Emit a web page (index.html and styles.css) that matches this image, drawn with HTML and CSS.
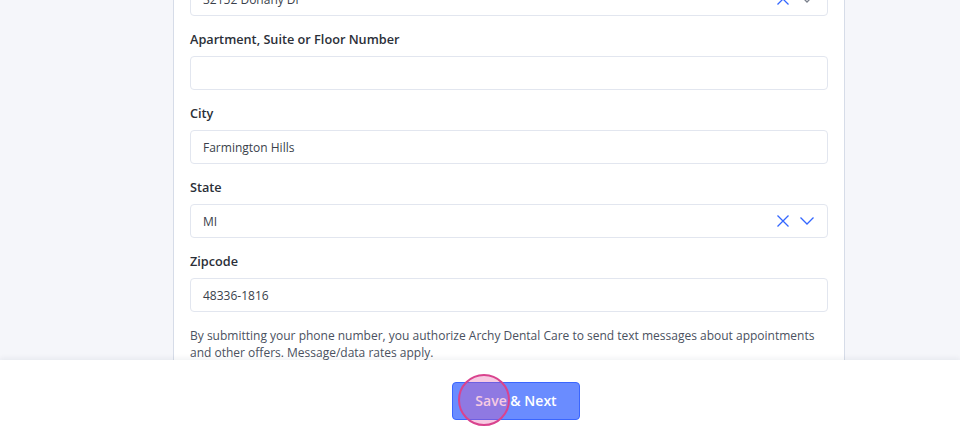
FILE: index.html
```html
<!DOCTYPE html>
<html lang="en">
<head>
<meta charset="utf-8">
<title>Address</title>
<link rel="stylesheet" href="styles.css">
</head>
<body>
<div class="viewport">
  <div class="card">
    <div class="field">
      <label class="label">Street Address</label>
      <div class="input select">
        <span class="value">32152 Donahy Dr</span>
        <span class="icons">
          <svg class="ico" width="12" height="12" viewBox="0 0 12 12"><path d="M0.5 0.5L11.5 11.5M11.5 0.5L0.5 11.5" stroke="#3366ff" stroke-width="1.3" fill="none"/></svg>
          <svg class="ico chev" width="14" height="8" viewBox="0 0 14 8"><path d="M0.5 0.5L7 7L13.5 0.5" stroke="#7a808c" stroke-width="1.3" fill="none"/></svg>
        </span>
      </div>
    </div>
    <div class="field">
      <label class="label">Apartment, Suite or Floor Number</label>
      <div class="input"><span class="value"></span></div>
    </div>
    <div class="field">
      <label class="label">City</label>
      <div class="input"><span class="value">Farmington Hills</span></div>
    </div>
    <div class="field">
      <label class="label">State</label>
      <div class="input select">
        <span class="value">MI</span>
        <span class="icons">
          <svg class="ico" width="12" height="12" viewBox="0 0 12 12"><path d="M0.5 0.5L11.5 11.5M11.5 0.5L0.5 11.5" stroke="#3366ff" stroke-width="1.3" fill="none"/></svg>
          <svg class="ico chev" width="14" height="8" viewBox="0 0 14 8"><path d="M0.5 0.5L7 7L13.5 0.5" stroke="#3366ff" stroke-width="1.3" fill="none"/></svg>
        </span>
      </div>
    </div>
    <div class="field">
      <label class="label">Zipcode</label>
      <div class="input"><span class="value">48336-1816</span></div>
    </div>
    <p class="notice">By submitting your phone number, you authorize Archy Dental Care to send text messages about appointments and other offers. Message/data rates apply.</p>
  </div>
</div>
<footer class="footer">
  <button class="btn" type="button">Save &amp; Next</button>
  <span class="click-dot"></span>
</footer>
</body>
</html>
```
FILE: styles.css
```css
* { box-sizing: border-box; }
html, body { margin: 0; padding: 0; }
body {
  width: 960px;
  height: 441px;
  overflow: hidden;
  font-family: "Open Sans", "Noto Sans", sans-serif;
  background: #f5f6fa;
  color: #2b2f38;
}
.viewport {
  height: 360px;
  overflow: hidden;
  background: #f5f6fa;
}
.card {
  margin-top: -60px;
  margin-left: 173px;
  width: 672px;
  background: #ffffff;
  border-left: 1px solid #d6dce8;
  border-right: 1px solid #d6dce8;
  padding: 16px 16px 40px;
}
.field {
  display: flex;
  flex-direction: column;
  gap: 8px;
  margin-bottom: 14px;
}
.label {
  font-size: 12.7px;
  font-weight: 600;
  line-height: 18px;
  color: #2b2f38;
}
.input {
  height: 34px;
  border: 1px solid #e2e6ef;
  border-radius: 4px;
  display: flex;
  align-items: center;
  padding: 0 12px;
  font-size: 12px;
  color: #3a3f4b;
}
.value { flex: 1; }
.icons {
  display: flex;
  align-items: center;
  gap: 11px;
  padding-right: 1px;
}
.ico { display: block; }
.notice {
  margin: 0;
  padding-top: 1px;
  font-size: 12px;
  line-height: 17px;
  color: #4a5160;
}
.footer {
  position: relative;
  height: 81px;
  background: #ffffff;
  box-shadow: 0 -2px 5px rgba(20, 30, 60, 0.06);
  display: flex;
  align-items: center;
  justify-content: center;
  padding-left: 72px;
}
.btn {
  width: 128px;
  height: 38px;
  background: #6a8cff;
  border: 1px solid #3a66ff;
  border-radius: 4px;
  color: #ffffff;
  font-family: "Open Sans", "Noto Sans", sans-serif;
  font-size: 14px;
  font-weight: 600;
}
.click-dot {
  position: absolute;
  left: 458px;
  top: 14px;
  width: 52px;
  height: 52px;
  border-radius: 50%;
  border: 2px solid #d9438e;
  background: rgba(230, 80, 160, 0.3);
}
```
